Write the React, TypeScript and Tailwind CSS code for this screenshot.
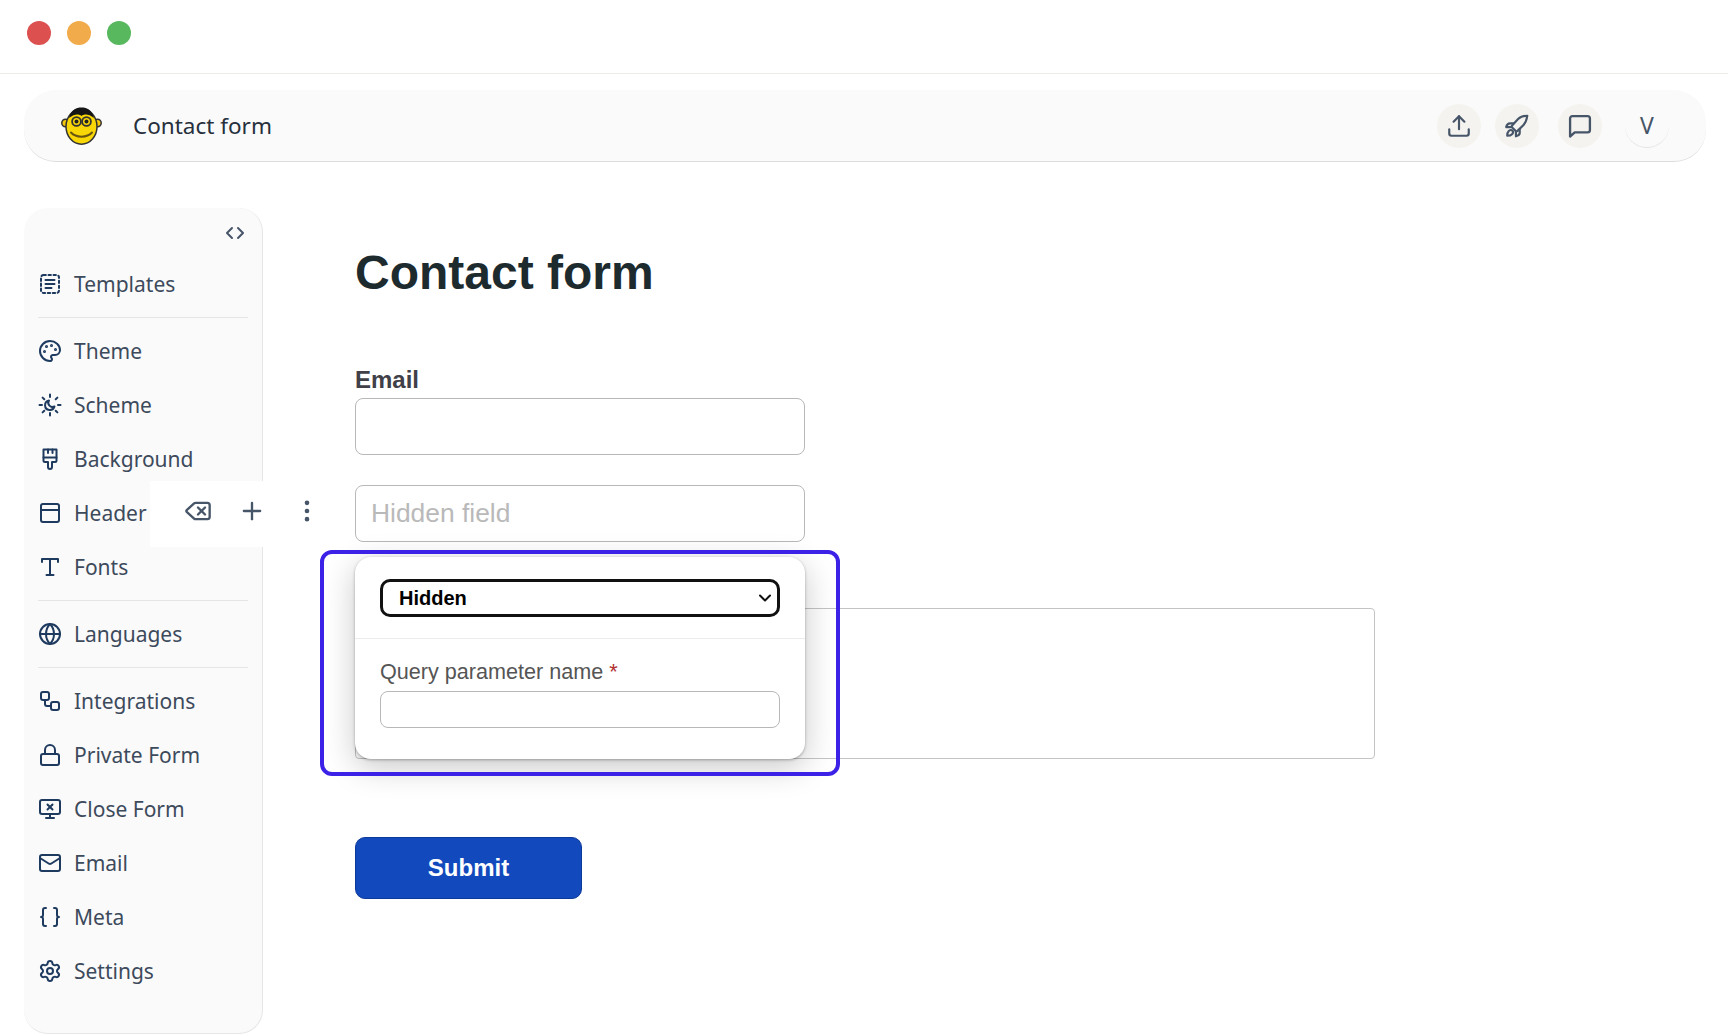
import { ReactNode } from "react";
import {
  Braces,
  Globe,
  Lock,
  Mail,
  Palette,
  Plus,
  Settings,
  Upload,
  Workflow,
  Delete,
  EllipsisVertical,
  PanelTop,
  MonitorX,
} from "lucide-react";

const iconClass = "w-[24px] h-[24px] text-[#1e3a5f]";

function TemplatesIcon() {
  return (
    <svg viewBox="0 0 24 24" fill="none" stroke="currentColor" strokeWidth="2" strokeLinecap="round" className={iconClass}>
      <rect x="3" y="3" width="18" height="18" rx="2.5" strokeDasharray="2.4 2.6" />
      <path d="M7.5 8h9M7.5 12h9M7.5 16h6" />
    </svg>
  );
}

function SchemeIcon() {
  return (
    <svg viewBox="0 0 24 24" fill="none" stroke="currentColor" strokeWidth="2" strokeLinecap="round" strokeLinejoin="round" className={iconClass}>
      <path d="M12 1.500v2.500M12 20v2.500M1.500 12H4M20 12h2.500M4.600 4.600l1.700 1.700M17.700 17.700l1.700 1.700M4.600 19.400l1.700-1.700M17.700 6.300l1.700-1.700" />
      <path d="M11 7.500a4.800 4.800 0 1 0 5.500 6 4.200 4.200 0 0 1-5.500-6z" />
    </svg>
  );
}

function FontsIcon() {
  return (
    <svg viewBox="0 0 24 24" fill="none" stroke="currentColor" strokeWidth="2" strokeLinecap="round" strokeLinejoin="round" className={iconClass}>
      <path d="M4 7V4h16v3M12 4v16M8.500 20h7" />
    </svg>
  );
}

function BrushIcon() {
  return (
    <svg viewBox="0 0 24 24" fill="none" stroke="currentColor" strokeWidth="2" strokeLinecap="round" strokeLinejoin="round" className={iconClass}>
      <path d="M5.500 2.500h13v11a1.500 1.500 0 0 1-1.500 1.500h-3v5a2 2 0 0 1-4 0v-5H7a1.500 1.500 0 0 1-1.500-1.500z" />
      <path d="M5.500 10.500h13M10 2.500v3.500M14.500 2.500v3.500" />
    </svg>
  );
}

function ChatIcon() {
  return (
    <svg viewBox="0 0 24 24" fill="none" stroke="currentColor" strokeWidth="2" strokeLinecap="round" strokeLinejoin="round" className="w-[28px] h-[28px]">
      <path d="M3.500 21V5.500a2 2 0 0 1 2-2h13a2 2 0 0 1 2 2v10a2 2 0 0 1-2 2H7.500z" />
    </svg>
  );
}

function RocketIcon() {
  return (
    <svg viewBox="0 0 24 24" fill="none" stroke="currentColor" strokeWidth="2" strokeLinecap="round" strokeLinejoin="round" className="w-[26px] h-[26px]">
      <path d="M21.500 2.500c-3.500 0-6.500 1-8.500 3L7.500 11.500c-.5.600-.5 1.300 0 1.800l3.200 3.200c.5.500 1.200.5 1.800 0l5.500-5.500c2-2 3-5 3.500-8.500z" />
      <path d="M9 9.500H5.500c-1.500 0-3 1.500-3.500 3.500h4M14.500 15v3.500c0 1.500-1.500 2.500-3.500 3v-4" />
      <path d="M7.800 16.300c1 1 .6 2.300-.4 3.300-.9.900-2.500 1.400-4.400 1.400 0-1.900.5-3.500 1.400-4.400 1-1 2.400-1.300 3.400-.3z" />
    </svg>
  );
}

function MonkeyLogo() {
  return (
    <svg viewBox="0 0 41 38" className="w-[41px] h-[38px]">
      <circle cx="4.500" cy="16" r="3.700" fill="#f5c80c" stroke="#333" strokeWidth="1.500" />
      <circle cx="36.500" cy="16" r="3.700" fill="#f5c80c" stroke="#333" strokeWidth="1.500" />
      <ellipse cx="20.500" cy="19.500" rx="15.500" ry="17.700" fill="#f9d606" stroke="#333" strokeWidth="1.500" />
      <path d="M8 11C10 3 15 .500 20.500 .500S31 3 33 11c-3-2.500-6-3.500-8-3.500-2 0-3.500.500-4.500 1.500-1-1-2.500-1.500-4.500-1.500-2 0-5 1-8 3.500z" fill="#151515" />
      <circle cx="15.500" cy="14.500" r="4.400" fill="#f9d606" stroke="#333" strokeWidth="1.800" />
      <circle cx="25.500" cy="14.500" r="4.400" fill="#f9d606" stroke="#333" strokeWidth="1.800" />
      <circle cx="15.500" cy="14.500" r="2" fill="#222" />
      <circle cx="25.500" cy="14.500" r="2" fill="#222" />
      <path d="M10 25.500c5 5.500 16 5.500 21 0" fill="none" stroke="#6a5510" strokeWidth="2" strokeLinecap="round" />
    </svg>
  );
}

const topMenu = [{ label: "Templates", icon: <TemplatesIcon /> }];
const themeMenu = [
  { label: "Theme", icon: <Palette className={iconClass} /> },
  { label: "Scheme", icon: <SchemeIcon /> },
  { label: "Background", icon: <BrushIcon /> },
  { label: "Header", icon: <PanelTop className={iconClass} /> },
  { label: "Fonts", icon: <FontsIcon /> },
];
const langMenu = [{ label: "Languages", icon: <Globe className={iconClass} /> }];
const restMenu = [
  { label: "Integrations", icon: <Workflow className={iconClass} /> },
  { label: "Private Form", icon: <Lock className={iconClass} /> },
  { label: "Close Form", icon: <MonitorX className={iconClass} /> },
  { label: "Email", icon: <Mail className={iconClass} /> },
  { label: "Meta", icon: <Braces className={iconClass} /> },
  { label: "Settings", icon: <Settings className={iconClass} /> },
];

function MenuGroup({ items }: { items: { label: string; icon: ReactNode }[] }) {
  return (
    <div className="flex flex-col">
      {items.map((item) => (
        <div key={item.label} className="flex items-center gap-[12px] h-[54px] pl-[14px]">
          {item.icon}
          <span className="pt-[2px] text-[21px] text-[#3d4a5c]">{item.label}</span>
        </div>
      ))}
    </div>
  );
}

function MenuDivider() {
  return <div className="h-px bg-[#e5e5e5] mx-[14px] my-[6px]" />;
}

function RoundButton({ children }: { children: ReactNode }) {
  return (
    <div className="w-[44px] h-[44px] rounded-full bg-[#f5f3ef] flex items-center justify-center text-[#475569]">
      {children}
    </div>
  );
}

export default function App() {
  return (
    <div className="relative h-[1034px] overflow-hidden bg-white font-['Noto_Sans',sans-serif]">
      <div className="h-[74px] border-b border-[#eeece6] flex items-center gap-[16px] pl-[27px] pb-[8px]">
        <span className="w-[24px] h-[24px] rounded-full bg-[#dc5050]" />
        <span className="w-[24px] h-[24px] rounded-full bg-[#f2ab4b]" />
        <span className="w-[24px] h-[24px] rounded-full bg-[#58b85e]" />
      </div>

      <header className="ml-[24px] mr-[22px] mt-[16px] h-[72px] rounded-[32px] bg-[#fafafa] border-b border-[#dddddd] flex items-center pl-[37px] pr-[36px]">
        <MonkeyLogo />
        <span className="ml-[31px] text-[22.500px] text-[#27303c]">Contact form</span>
        <div className="ml-auto flex items-center">
          <RoundButton>
            <Upload className="w-[26px] h-[26px]" />
          </RoundButton>
          <div className="ml-[14px]">
            <RoundButton>
              <RocketIcon />
            </RoundButton>
          </div>
          <div className="ml-[19px]">
            <RoundButton>
              <ChatIcon />
            </RoundButton>
          </div>
          <div className="ml-[23px] mr-[1px] w-[44px] h-[44px] rounded-full border-b border-[#e2e2e2] flex items-center justify-center text-[23px] text-[#475569]">
            V
          </div>
        </div>
      </header>

      <div className="flex mt-[46px] ml-[24px]">
        <aside className="w-[239px] h-[826px] rounded-[24px] bg-[#fafafa] border-r border-b border-[#e6e6e6] shrink-0">
          <div className="flex justify-end pr-[17px] pt-[15px] h-[49px]">
            <svg viewBox="0 0 20 20" fill="none" stroke="#475569" strokeWidth="2" strokeLinecap="round" strokeLinejoin="round" className="w-[20px] h-[20px]">
              <path d="M7 5l-5 5 5 5M13 5l5 5-5 5" />
            </svg>
          </div>
          <MenuGroup items={topMenu} />
          <MenuDivider />
          <MenuGroup items={themeMenu} />
          <MenuDivider />
          <MenuGroup items={langMenu} />
          <MenuDivider />
          <MenuGroup items={restMenu} />
        </aside>

        <main className="ml-[92px] w-[1020px] font-['Liberation_Sans',sans-serif]">
          <h1 className="mt-[37px] text-[48px] leading-[56px] font-bold text-[#1d2b2f]">Contact form</h1>
          <label className="block mt-[65px] text-[24px] leading-[28px] font-bold text-[#404048]">Email</label>
          <div className="mt-[4px] w-[450px] h-[57px] rounded-[8px] border border-[#b8b8b8]" />
          <div className="mt-[30px] w-[450px] h-[57px] rounded-[8px] border border-[#b8b8b8] flex items-center pl-[15px] text-[26.400px] text-[#b9b9b9]">
            Hidden field
          </div>
          <div className="mt-[66px] w-[1020px] h-[151px] rounded-[4px] border border-[#c4c4c4]" />
          <button className="mt-[78px] w-[227px] h-[62px] rounded-[10px] bg-[#1249bd] border border-[#0d3a9a] text-white text-[24px] font-bold">
            Submit
          </button>
        </main>
      </div>

      {/* floating toolbar over the sidebar */}
      <div className="absolute left-[150px] top-[481px] w-[160px] h-[66px] bg-white flex items-center text-[#475569]">
        <Delete className="absolute left-[34px] top-[16px] w-[28px] h-[28px]" />
        <Plus className="absolute left-[88px] top-[16px] w-[28px] h-[28px]" />
        <EllipsisVertical className="absolute left-[143px] top-[16px] w-[28px] h-[28px]" />
      </div>

      {/* field settings popup */}
      <div className="absolute left-[355px] top-[557px] w-[450px] h-[202px] rounded-[16px] bg-white shadow-[0_8px_32px_rgba(0,0,0,0.22),0_1px_3px_rgba(0,0,0,0.3)] font-['Liberation_Sans',sans-serif]">
        <div className="h-[82px] border-b border-[#ececec] pt-[22px] px-[25px]">
          <div className="relative">
            <select className="w-full h-[38px] appearance-none rounded-[10px] border-[3px] border-[#111] bg-white pl-[16px] pr-[4px] text-[20px] font-bold text-black">
              <option>Hidden</option>
            </select>
            <svg viewBox="0 0 14 10" fill="none" stroke="#111" strokeWidth="2" strokeLinecap="round" strokeLinejoin="round" className="absolute right-[8px] top-[14px] w-[14px] h-[10px] pointer-events-none">
              <path d="M2 2.500l5 5 5-5" />
            </svg>
          </div>
        </div>
        <div className="px-[25px] pt-[21px]">
          <div className="text-[21.600px] leading-[24px] text-[#555]">
            Query parameter name <span className="text-[#b03030]">*</span>
          </div>
          <div className="mt-[7px] h-[37px] rounded-[8px] border border-[#b8b8b8]" />
        </div>
      </div>

      {/* highlight frame */}
      <div className="absolute left-[320px] top-[550px] w-[520px] h-[226px] rounded-[12px] border-[4px] border-[#3b22e6]" />
    </div>
  );
}
